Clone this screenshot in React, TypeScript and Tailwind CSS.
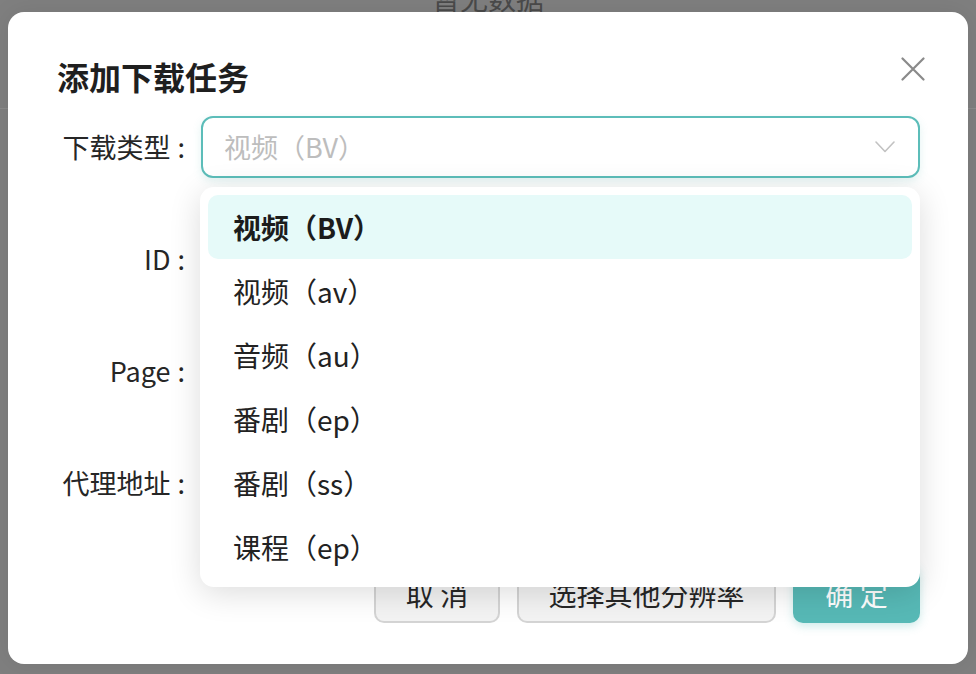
import React from 'react';

const OPTIONS = ['视频（BV）', '视频（av）', '音频（au）', '番剧（ep）', '番剧（ss）', '课程（ep）'];

const FONT = "font-['Noto_Sans_CJK_SC','Noto_Sans',sans-serif]";

function CloseIcon() {
  return (
    <svg width="24" height="24" viewBox="0 0 24 24" fill="none">
      <path d="M1.5 1.5L22.5 22.5M22.5 1.5L1.5 22.5" stroke="#8a8a8a" strokeWidth="2.2" strokeLinecap="round" />
    </svg>
  );
}

function Chevron() {
  return (
    <svg width="20" height="12" viewBox="0 0 20 12" fill="none">
      <path d="M1 1L10 10.5L19 1" stroke="#c2c2c2" strokeWidth="1.6" strokeLinecap="round" strokeLinejoin="round" />
    </svg>
  );
}

function FormRow({ label, children }: { label: string; children: React.ReactNode }) {
  return (
    <div className="mb-[50px] flex items-center">
      <label className="w-[145px] shrink-0 pr-[16px] text-right text-[27px] text-[#262626]">
        {label}
        <span className="ml-[7px]">:</span>
      </label>
      <div className="relative flex-1">{children}</div>
    </div>
  );
}

function TextInput() {
  return <div className="h-[62px] rounded-[12px] border-2 border-[#dcdcdc] bg-white" />;
}

export default function App() {
  return (
    <div className={`relative h-[674px] w-full overflow-hidden bg-[#7f7f7f] ${FONT}`}>
      {/* page behind the mask */}
      <div className="flex h-[109px] justify-center border-b border-[#8b8b8b]">
        <span className="mt-[-16px] text-[28px] leading-[28px] text-[#4a4a4a]">暂无数据</span>
      </div>

      <div className="absolute inset-0 flex items-center justify-center pt-[2px]">
        <div className="h-[652px] w-[960px] rounded-[16px] bg-white px-[48px] pt-[44px] shadow-[0_0_24px_rgba(0,0,0,0.08)]">
          <div className="flex h-[40px] items-center justify-between">
            <h2 className="pl-[1px] text-[32px] font-bold leading-[40px] text-[#1f1f1f]">添加下载任务</h2>
            <button className="mr-[-5px] mt-[-14px]">
              <CloseIcon />
            </button>
          </div>

          <div className="mt-[20px]">
            <FormRow label="下载类型">
              <div className="flex h-[62px] items-center justify-between rounded-[12px] border-2 border-[#5cbdb9] bg-white pl-[21px] pr-[23px] shadow-[0_3px_8px_rgba(92,189,185,0.18)]">
                <span className="text-[27px] text-[#bdbdbd]">视频（BV）</span>
                <Chevron />
              </div>

              <div className="absolute left-[-1px] right-0 top-[71px] z-10 rounded-[14px] bg-white px-[8px] py-[8px] shadow-[0_6px_32px_rgba(0,0,0,0.14)]">
                {OPTIONS.map((opt, i) => (
                  <div
                    key={opt}
                    className={
                      i === 0
                        ? 'flex h-[64px] items-center rounded-[10px] bg-[#e6faf9] pl-[25px] text-[28px] font-bold text-[#1c1c1c]'
                        : 'flex h-[64px] items-center rounded-[10px] pl-[25px] text-[28px] text-[#222222]'
                    }
                  >
                    {opt}
                  </div>
                ))}
              </div>
            </FormRow>

            <FormRow label="ID">
              <TextInput />
            </FormRow>
            <FormRow label="Page">
              <TextInput />
            </FormRow>
            <FormRow label="代理地址">
              <TextInput />
            </FormRow>
          </div>

          <div className="flex justify-end gap-[17px]">
            <button className="h-[59px] w-[126px] rounded-[10px] border-2 border-[#d4d4d4] bg-[#f3f3f3] text-[28px] text-[#262626]">
              取 消
            </button>
            <button className="h-[59px] w-[259px] rounded-[10px] border-2 border-[#d4d4d4] bg-[#f3f3f3] text-[28px] text-[#262626]">
              选择其他分辨率
            </button>
            <button className="h-[59px] w-[127px] rounded-[10px] bg-[#57b9b6] text-[28px] text-white shadow-[0_3px_10px_rgba(87,185,182,0.3)]">
              确 定
            </button>
          </div>
        </div>
      </div>
    </div>
  );
}
